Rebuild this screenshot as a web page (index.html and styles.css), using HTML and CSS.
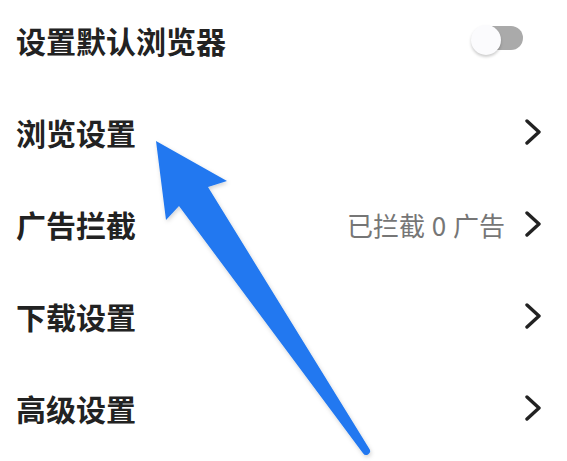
FILE: index.html
```html
<!DOCTYPE html>
<html lang="zh-CN">
<head>
<meta charset="utf-8">
<link rel="stylesheet" href="styles.css">
</head>
<body>
<div class="page">
  <ul class="list">
    <li class="row">
      <span class="label">设置默认浏览器</span>
      <span class="toggle"><span class="track"></span><span class="knob"></span></span>
    </li>
    <li class="row">
      <span class="label">浏览设置</span>
      <svg class="chev" viewBox="0 0 16 26" width="16" height="26"><path d="M2 2 L14 13 L2 24" /></svg>
    </li>
    <li class="row">
      <span class="label">广告拦截</span>
      <span class="right"><span class="hint">已拦截 0 广告</span>
      <svg class="chev" viewBox="0 0 16 26" width="16" height="26"><path d="M2 2 L14 13 L2 24" /></svg></span>
    </li>
    <li class="row">
      <span class="label">下载设置</span>
      <svg class="chev" viewBox="0 0 16 26" width="16" height="26"><path d="M2 2 L14 13 L2 24" /></svg>
    </li>
    <li class="row">
      <span class="label">高级设置</span>
      <svg class="chev" viewBox="0 0 16 26" width="16" height="26"><path d="M2 2 L14 13 L2 24" /></svg>
    </li>
  </ul>
  <svg class="arrow" viewBox="0 0 567 461" width="567" height="461">
    <defs>
      <filter id="sh" x="-20%" y="-20%" width="140%" height="140%">
        <feDropShadow dx="1" dy="2" stdDeviation="2" flood-color="#000" flood-opacity="0.18"/>
      </filter>
    </defs>
    <path filter="url(#sh)" fill="#2178f0" d="M156 141 L227 181 L208 187 L369.3 448.8 A3.8 3.8 0 0 1 363 453.2 L179 206 L166 220 Z"/>
  </svg>
</div>
</body>
</html>
```
FILE: styles.css
```css
html, body {
  margin: 0;
  padding: 0;
  background: #ffffff;
}
.page {
  position: relative;
  width: 567px;
  height: 461px;
  overflow: hidden;
  font-family: "Noto Sans CJK SC", "Noto Sans", sans-serif;
}
.list {
  list-style: none;
  margin: -6px 0 0 0;
  padding: 0;
}
.row {
  height: 92px;
  display: flex;
  align-items: center;
  justify-content: space-between;
  padding: 0 26px 0 16px;
}
.label {
  font-size: 30px;
  font-weight: 700;
  color: #222222;
  letter-spacing: 0;
}
.right {
  display: flex;
  align-items: center;
  gap: 20px;
}
.hint {
  font-size: 26px;
  color: #767676;
  word-spacing: 1px;
}
.chev {
  display: block;
  fill: none;
  stroke: #222222;
  stroke-width: 3.4;
  stroke-linecap: round;
  stroke-linejoin: round;
}
.toggle {
  position: relative;
  width: 52px;
  height: 30px;
  margin-right: 18px;
}
.track {
  position: absolute;
  right: 0;
  top: 1px;
  width: 44px;
  height: 24px;
  border-radius: 12px;
  background: #aaaaaa;
}
.knob {
  position: absolute;
  left: 0;
  top: 0;
  width: 30px;
  height: 30px;
  border-radius: 50%;
  background: #fbfbfd;
  box-shadow: 0 2px 3px rgba(0,0,0,0.2);
}
.arrow {
  position: absolute;
  left: 0;
  top: 0;
  pointer-events: none;
}
```
